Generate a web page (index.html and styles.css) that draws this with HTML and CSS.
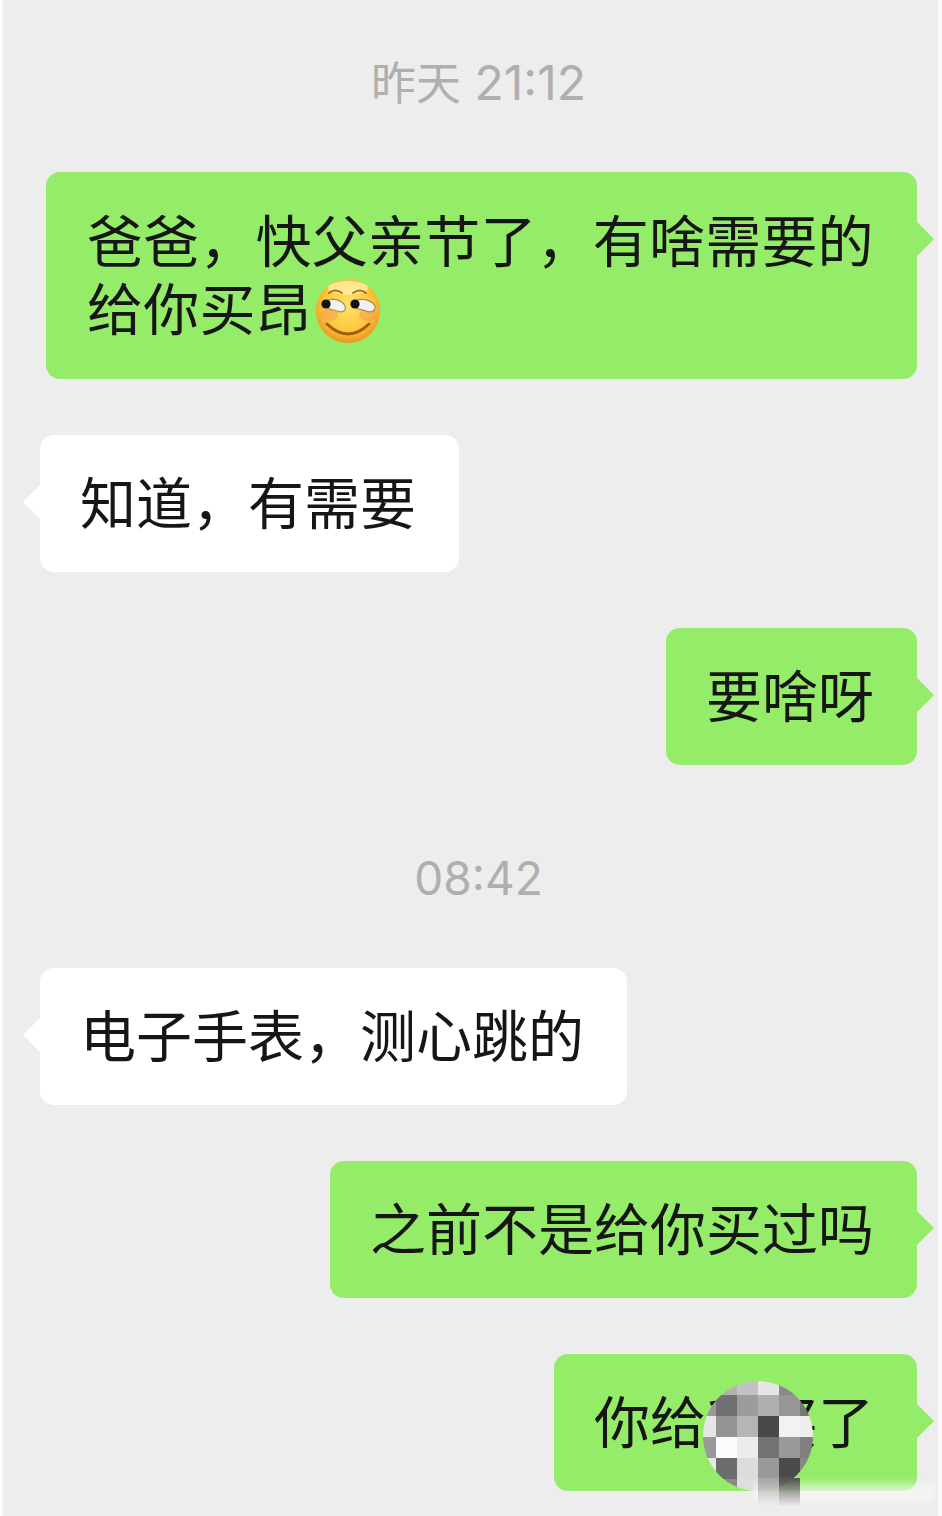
FILE: index.html
```html
<!DOCTYPE html>
<html lang="zh-CN">

<head>
    <meta charset="UTF-8">
    <title>聊天记录</title>
    <meta name="viewport" content="width=device-width, initial-scale=1.0">
    <link rel="stylesheet" href="styles.css">
</head>

<body>
    <div class="chat">
        <div class="time time-first"><span class="time-day">昨天</span> 21:12</div>

        <div class="row row-me row-first">
            <div class="bubble bubble-me bubble-wide">爸爸，快父亲节了，有啥需要的给你买昂<svg class="emoji" viewBox="0 0 66 66" aria-hidden="true">
                    <defs>
                        <radialGradient id="face" cx="50%" cy="42%" r="58%">
                            <stop offset="0" stop-color="#ffe26a" />
                            <stop offset="0.65" stop-color="#fdc83a" />
                            <stop offset="1" stop-color="#ee9420" />
                        </radialGradient>
                    </defs>
                    <circle cx="33" cy="33" r="32" fill="url(#face)" />
                    <ellipse cx="33" cy="10" rx="20" ry="7" fill="#fff3b8" opacity="0.7" />
                    <ellipse cx="14" cy="37" rx="9" ry="6" fill="#f59a52" opacity="0.5" />
                    <ellipse cx="53" cy="37" rx="9" ry="6" fill="#f59a52" opacity="0.5" />
                    <path d="M14 15q6-5 13 0" fill="none" stroke="#a9741f" stroke-width="2" stroke-linecap="round" />
                    <path d="M38 15q7-5 13 0" fill="none" stroke="#a9741f" stroke-width="2" stroke-linecap="round" />
                    <path d="M8 26c5-7 18-6 22 2 2 5-3 7-8 5-5-2-10-1-14-7z" fill="#f2f2f2" stroke="#a98a55" stroke-width="1.2" />
                    <path d="M37 26c5-7 18-6 23 2 1 5-4 7-9 5-6-2-10-1-14-7z" fill="#f2f2f2" stroke="#a98a55" stroke-width="1.2" />
                    <circle cx="11" cy="26" r="4.6" fill="#111" />
                    <circle cx="40" cy="26" r="4.6" fill="#111" />
                    <path d="M12 46q21 20 42 0" fill="none" stroke="#9a5d10" stroke-width="2.8" stroke-linecap="round" />
                </svg></div>
        </div>

        <div class="row row-other">
            <div class="bubble bubble-other">知道，有需要</div>
        </div>

        <div class="row row-me">
            <div class="bubble bubble-me">要啥呀</div>
        </div>

        <div class="time time-second">08:42</div>

        <div class="row row-other">
            <div class="bubble bubble-other">电子手表，测心跳的</div>
        </div>

        <div class="row row-me">
            <div class="bubble bubble-me">之前不是给你买过吗</div>
        </div>

        <div class="row row-me">
            <div class="bubble bubble-me">你给我买了
                <svg class="mosaic" viewBox="0 0 110 110" aria-hidden="true">
                    <rect x="13" y="-7" width="21" height="21" fill="#b2b2b2" />
                    <rect x="34" y="-7" width="21" height="21" fill="#c2c2c2" />
                    <rect x="55" y="-7" width="21" height="21" fill="#e6e6e6" />
                    <rect x="76" y="-7" width="21" height="21" fill="#8a8a8a" />

                    <rect x="-8" y="14" width="21" height="21" fill="#999999" />
                    <rect x="13" y="14" width="21" height="21" fill="#717171" />
                    <rect x="34" y="14" width="21" height="21" fill="#9c9c9c" />
                    <rect x="55" y="14" width="21" height="21" fill="#b0b0b0" />
                    <rect x="76" y="14" width="21" height="21" fill="#969696" />
                    <rect x="97" y="14" width="21" height="21" fill="#777777" />

                    <rect x="-8" y="35" width="21" height="21" fill="#e6e6e6" />
                    <rect x="13" y="35" width="21" height="21" fill="#949494" />
                    <rect x="34" y="35" width="21" height="21" fill="#b5b5b5" />
                    <rect x="55" y="35" width="21" height="21" fill="#484848" />
                    <rect x="76" y="35" width="21" height="21" fill="#f2f2f2" />
                    <rect x="97" y="35" width="21" height="21" fill="#eeeeee" />

                    <rect x="-8" y="56" width="21" height="21" fill="#999999" />
                    <rect x="13" y="56" width="21" height="21" fill="#fbfbfb" />
                    <rect x="34" y="56" width="21" height="21" fill="#ececec" />
                    <rect x="55" y="56" width="21" height="21" fill="#727272" />
                    <rect x="76" y="56" width="21" height="21" fill="#999999" />
                    <rect x="97" y="56" width="21" height="21" fill="#808080" />

                    <rect x="-8" y="77" width="21" height="21" fill="#e8e8e8" />
                    <rect x="13" y="77" width="21" height="21" fill="#6c6c6c" />
                    <rect x="34" y="77" width="21" height="21" fill="#dcdcdc" />
                    <rect x="55" y="77" width="21" height="21" fill="#999999" />
                    <rect x="76" y="77" width="21" height="21" fill="#4a4a4a" />
                    <rect x="97" y="77" width="21" height="21" fill="#888888" />

                    <rect x="13" y="98" width="21" height="21" fill="#8a8a8a" />
                    <rect x="34" y="98" width="21" height="21" fill="#dedede" />
                    <rect x="55" y="98" width="21" height="21" fill="#b0b0b0" />
                    <rect x="76" y="98" width="21" height="21" fill="#666666" />
                </svg>
            </div>
        </div>

        <!-- watermark smear at the bottom corner -->
        <div class="smear"></div>
        <div class="smear-col smear-col-a"></div>
        <div class="smear-col smear-col-b"></div>
    </div>
</body>

</html>
```

FILE: styles.css
```css
body {
    margin: 0;
    background: #fafafa;
}

.chat {
    position: relative;
    box-sizing: border-box;
    width: 935px;
    height: 1516px;
    margin-left: 3px;
    padding: 0 21px 0 37px;
    overflow: hidden;
    background: #ededed;
    font-family: "Noto Sans CJK SC", "Noto Sans", sans-serif;
}

.time {
    height: 52px;
    line-height: 52px;
    text-align: center;
    font-size: 46px;
    color: #afafaf;
    font-family: Inter, "Noto Sans CJK SC", sans-serif;
}

.time-day {
    font-size: 45px;
}

.time-first {
    padding-top: 57px;
    margin-bottom: 63px;
    font-size: 48px;
}

.time-second {
    margin-top: 87px;
    margin-bottom: 64px;
}

.row {
    display: flex;
}

.row+.row {
    margin-top: 56px;
}

.row-first {
    margin-bottom: 1px;
}

.row-me {
    justify-content: flex-end;
}

.row-other {
    justify-content: flex-start;
}

.bubble {
    position: relative;
    box-sizing: border-box;
    max-width: 871px;
    padding: 31.5px 43px 37.5px 40px;
    border-radius: 14px;
    font-size: 56px;
    line-height: 68px;
    color: #161616;
}

.bubble::after {
    content: "";
    position: absolute;
    top: 55px;
    width: 24px;
    height: 24px;
    transform: rotate(45deg);
}

.bubble-wide {
    padding: 31.5px 42px 38.5px 41px;
    letter-spacing: 0.2px;
}

.bubble-me {
    background: #95ec69;
}

.bubble-me::after {
    right: -12px;
    background: #95ec69;
}

.bubble-other {
    background: #fff;
}

.bubble-other::after {
    left: -12px;
    background: #fff;
}

.emoji {
    display: inline-block;
    width: 66px;
    height: 66px;
    margin: -10px 0 -4px 3px;
    vertical-align: middle;
}

.mosaic {
    position: absolute;
    left: 149px;
    top: 27px;
    width: 110px;
    height: 110px;
    border-radius: 50%;
}

.smear {
    position: absolute;
    left: 750px;
    top: 1478px;
    width: 182px;
    height: 28px;
    background: linear-gradient(rgba(255, 255, 255, 0), rgba(247, 247, 247, 0.8) 50%, rgba(240, 240, 240, 0.5));
    filter: blur(2px);
}

.smear-col {
    position: absolute;
    top: 1478px;
    width: 21px;
    height: 28px;
}

.smear-col-a {
    left: 755px;
    background: linear-gradient(#aaa, rgba(237, 237, 237, 0.1));
}

.smear-col-b {
    left: 776px;
    background: linear-gradient(#555, rgba(200, 200, 200, 0.1));
}
```
